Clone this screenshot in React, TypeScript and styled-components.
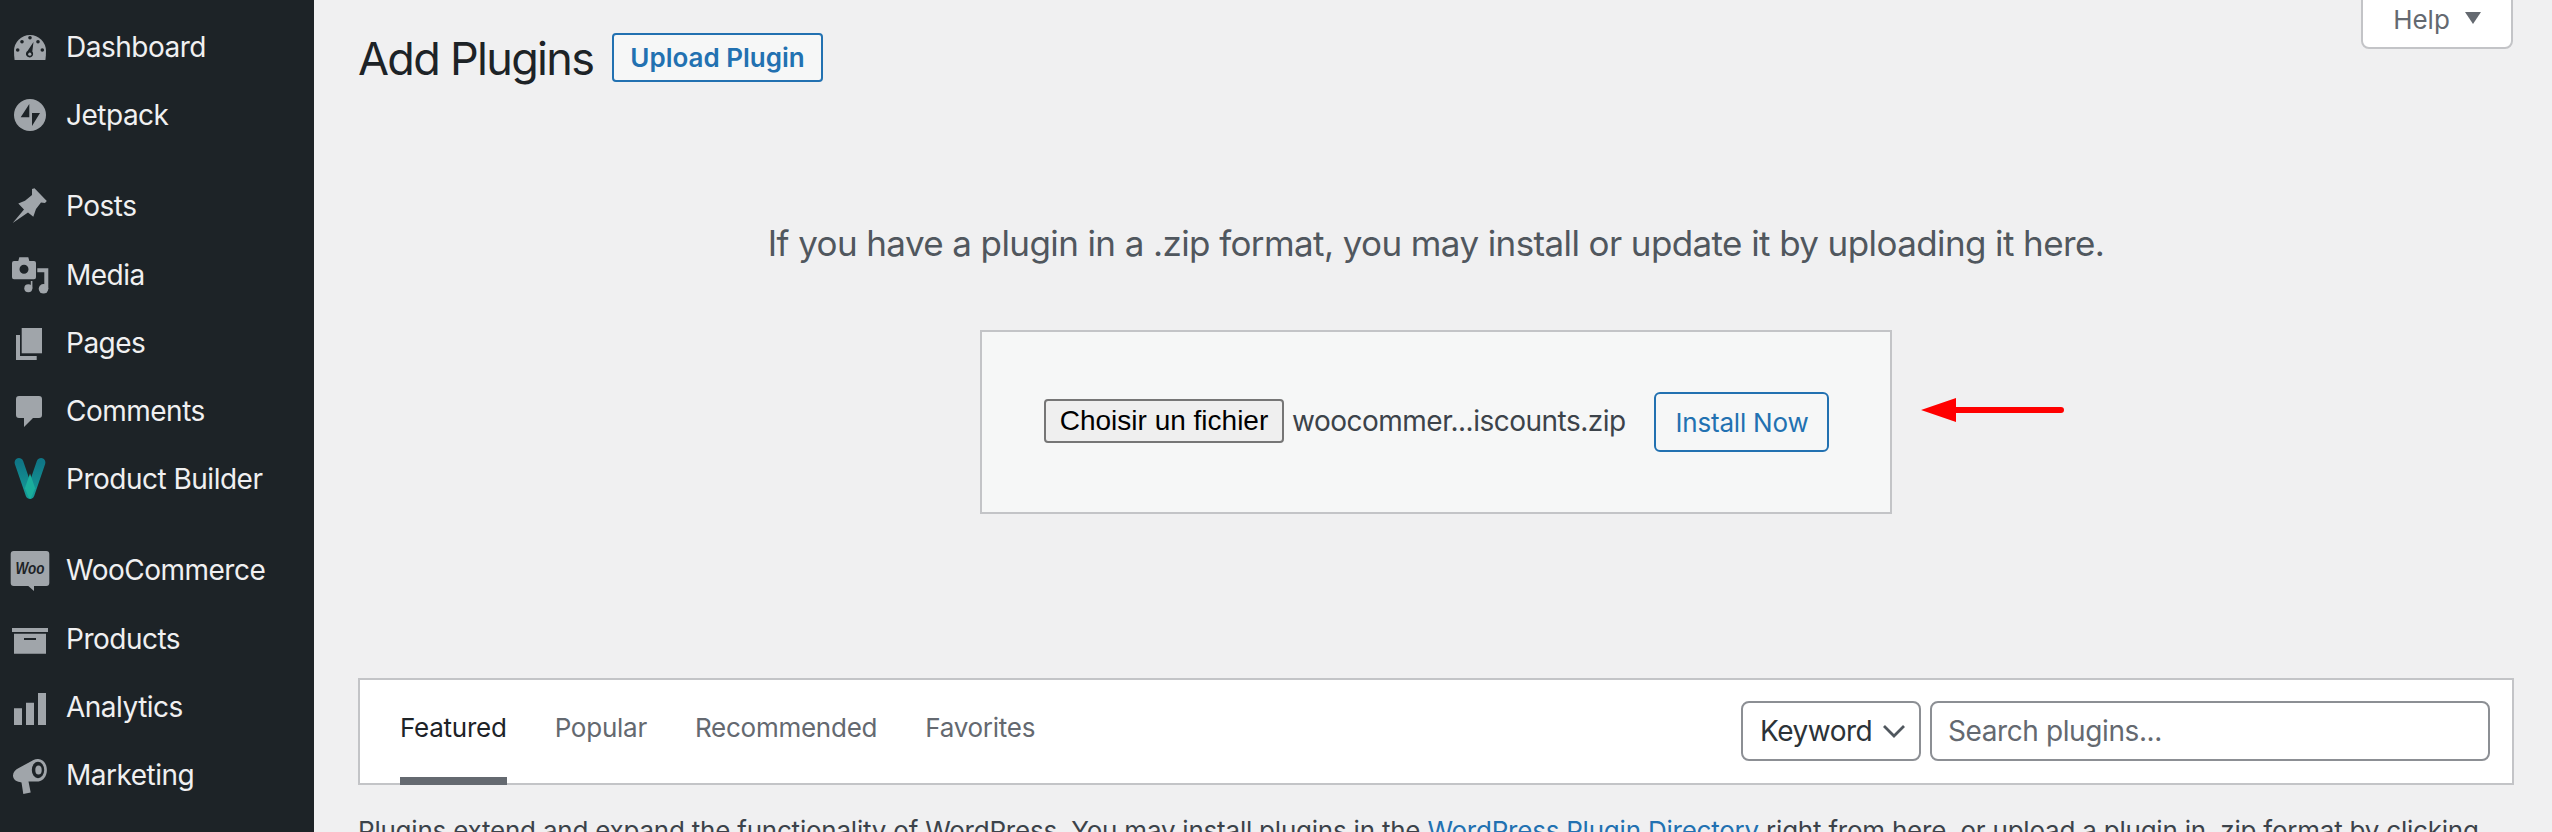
import React from 'react';
import styled, { createGlobalStyle } from 'styled-components';

const GlobalStyle = createGlobalStyle`
  html, body {
    margin: 0;
    height: 100%;
    overflow: hidden;
    background: #f0f0f1;
    font-family: Inter, "Noto Sans", sans-serif;
  }
  * {
    box-sizing: border-box;
  }
`;

const IconSvg: React.FC<{ children: React.ReactNode }> = ({ children }) => (
  <MenuIcon viewBox="0 0 40 40" fill="#a0a5aa">
    {children}
  </MenuIcon>
);

const DashboardIcon = () => (
  <IconSvg>
    <path d="M4.6 33C4.2 30 4 27 4 24a16 16 0 0 1 32 0c0 3-.2 6-.6 9z" />
    <g fill="#1d2327">
      <circle cx="20" cy="10.7" r="1.8" />
      <circle cx="12" cy="14.7" r="1.8" />
      <circle cx="28" cy="14.7" r="1.8" />
      <circle cx="7.7" cy="23" r="1.8" />
      <circle cx="32.3" cy="23" r="1.8" />
      <path d="M23.5 15l-1.2 9.5a3.6 3.6 0 1 1-4.6-.8z" />
    </g>
    <circle cx="19.8" cy="27.2" r="1.6" />
  </IconSvg>
);

const JetpackIcon = () => (
  <IconSvg>
    <circle cx="20" cy="20" r="16" />
    <path d="M19.3 9v13.3h-8.6zM22 18h8l-8 13z" fill="#1d2327" />
  </IconSvg>
);

const PostsIcon = () => (
  <IconSvg>
    <path d="M2.7 37L14 23.5l-5.7-6 6.7-2.8 7-5.7V3l2.5-.7L36.8 15 35 17l-4-.5-5 6.5-2.7 7.7-5.3-4.2z" />
  </IconSvg>
);

const MediaIcon = () => (
  <IconSvg>
    <path
      fillRule="evenodd"
      d="M4 6h4.3l1-3.7h9l1 3.7H24a2 2 0 0 1 2 2v14.3a2 2 0 0 1-2 2H4a2 2 0 0 1-2-2V8a2 2 0 0 1 2-2zm10 3.8a4.5 4.5 0 1 0 0 9 4.5 4.5 0 0 0 0-9z"
    />
    <path d="M27.3 13.3h11V34h-4V17.3h-7z" />
    <circle cx="18.3" cy="33.3" r="4" />
    <circle cx="33.5" cy="33.8" r="4.8" />
    <path d="M20.8 26h1.6v7.5h-1.6z" />
  </IconSvg>
);

const PagesIcon = () => (
  <IconSvg>
    <path d="M11.7 5H32v25.3H11.7z" />
    <path d="M6 12h4v21h16.7v4H6z" />
  </IconSvg>
);

const CommentsIcon = () => (
  <IconSvg>
    <path d="M9 5h20a3 3 0 0 1 3 3v16a3 3 0 0 1-3 3h-6l-9 9v-9H9a3 3 0 0 1-3-3V8a3 3 0 0 1 3-3z" />
  </IconSvg>
);

const BuilderIcon = () => (
  <MenuIcon viewBox="0 0 40 40">
    <defs>
      <linearGradient id="vee" x1="0" y1="0" x2="0" y2="1">
        <stop offset="0" stopColor="#0f7686" />
        <stop offset="1" stopColor="#169a96" />
      </linearGradient>
    </defs>
    <path
      d="M9 3.5L20 35.5 31 3.5"
      fill="none"
      stroke="url(#vee)"
      strokeWidth="8.8"
      strokeLinecap="round"
      strokeLinejoin="round"
    />
    <path d="M20 14.5l5.2 14.8L21 39a1.5 1.5 0 0 1-2 0l-4.2-9.7z" fill="#1aae9c" />
  </MenuIcon>
);

const WooIcon = () => (
  <IconSvg>
    <path d="M3.7 1h32.6a3 3 0 0 1 3 3v29a3 3 0 0 1-3 3H24v5l-5.7-5H3.7a3 3 0 0 1-3-3V4a3 3 0 0 1 3-3z" />
    <WooLabel x="20" y="24" textAnchor="middle" textLength="29" lengthAdjust="spacingAndGlyphs">
      Woo
    </WooLabel>
  </IconSvg>
);

const ProductsIcon = () => (
  <IconSvg>
    <path d="M2 9h36v4H2z" />
    <path fillRule="evenodd" d="M4 14.7h32v20H4zM14 19v2h12v-2z" />
  </IconSvg>
);

const AnalyticsIcon = () => (
  <IconSvg>
    <path d="M4 21.3h8V38H4zM16 15.7h8V38h-8zM28 6h8v32h-8z" />
  </IconSvg>
);

const MarketingIcon = () => (
  <IconSvg>
    <path d="M8.3 13.3L23.5 5c1.5-.8 3-1.1 4.8-1 5 .3 8.6 5 8.6 11 0 6-3.6 11-8.4 11.5-.8.1-1.5.1-2.3.1H18.5l2.2 10.9-7.4 1.4-1.8-11.5-1.7-.4C6 26.7 3 24 3 20.5c0-3.2 2.4-5.6 5.3-7.2z" />
    <ellipse cx="28" cy="15" rx="6.2" ry="8.2" fill="#1d2327" />
    <ellipse cx="28.5" cy="15" rx="3.2" ry="4.6" />
  </IconSvg>
);

type MenuEntry = { label: string; icon: React.ReactNode };

const menuGroups: MenuEntry[][] = [
  [
    { label: 'Dashboard', icon: <DashboardIcon /> },
    { label: 'Jetpack', icon: <JetpackIcon /> },
  ],
  [
    { label: 'Posts', icon: <PostsIcon /> },
    { label: 'Media', icon: <MediaIcon /> },
    { label: 'Pages', icon: <PagesIcon /> },
    { label: 'Comments', icon: <CommentsIcon /> },
    { label: 'Product Builder', icon: <BuilderIcon /> },
  ],
  [
    { label: 'WooCommerce', icon: <WooIcon /> },
    { label: 'Products', icon: <ProductsIcon /> },
    { label: 'Analytics', icon: <AnalyticsIcon /> },
    { label: 'Marketing', icon: <MarketingIcon /> },
  ],
];

const tabs = ['Featured', 'Popular', 'Recommended', 'Favorites'];

export default function App() {
  return (
    <Page>
      <GlobalStyle />
      <Sidebar>
        {menuGroups.map((group) => (
          <MenuGroup key={group[0].label}>
            {group.map((item) => (
              <MenuRow key={item.label}>
                {item.icon}
                <span>{item.label}</span>
              </MenuRow>
            ))}
          </MenuGroup>
        ))}
      </Sidebar>
      <Main>
        <HelpTab>
          Help
          <HelpCaret />
        </HelpTab>
        <Header>
          <Title>Add Plugins</Title>
          <UploadButton>Upload Plugin</UploadButton>
        </Header>
        <UploadHint>
          If you have a plugin in a .zip format, you may install or update it by uploading it here.
        </UploadHint>
        <UploadBox>
          <FileButton>Choisir un fichier</FileButton>
          <FileName>woocommer...iscounts.zip</FileName>
          <InstallButton>Install Now</InstallButton>
          <ArrowMark viewBox="0 0 143 24">
            <path d="M0 12L35 0v9h105a3 3 0 0 1 0 6H35v9z" fill="#ff0000" />
          </ArrowMark>
        </UploadBox>
        <FilterBar>
          <TabList>
            {tabs.map((tab, i) => (
              <Tab key={tab} $active={i === 0}>
                {tab}
              </Tab>
            ))}
          </TabList>
          <SearchForm>
            <SelectWrap>
              <KeywordSelect defaultValue="Keyword">
                <option>Keyword</option>
              </KeywordSelect>
              <SelectChevron viewBox="0 0 24 14">
                <path d="M2 2l10 10L22 2" fill="none" stroke="#50575e" strokeWidth="2.8" />
              </SelectChevron>
            </SelectWrap>
            <SearchInput placeholder="Search plugins..." />
          </SearchForm>
        </FilterBar>
        <Intro>
          Plugins extend and expand the functionality of WordPress. You may install plugins in the{' '}
          <IntroLink href="#">WordPress Plugin Directory</IntroLink> right from here, or upload a
          plugin in .zip format by clicking the button at the top of this page.
        </Intro>
      </Main>
    </Page>
  );
}

const Page = styled.div`
  display: flex;
  height: 832px;
  overflow: hidden;
`;

const Sidebar = styled.nav`
  flex: 0 0 314px;
  height: 832px;
  padding-top: 13px;
  background: #1d2327;
  display: flex;
  flex-direction: column;
  gap: 23px;
`;

const MenuGroup = styled.div`
  display: flex;
  flex-direction: column;
`;

const MenuRow = styled.div`
  height: 68.2px;
  padding-left: 10px;
  display: flex;
  align-items: center;
  gap: 16px;
  color: #f0f0f1;
  font-size: 28px;
  letter-spacing: -0.5px;
`;

const MenuIcon = styled.svg`
  width: 40px;
  height: 40px;
  flex: none;
  overflow: visible;
`;

const WooLabel = styled.text`
  font-family: "Liberation Sans", sans-serif;
  font-size: 17px;
  font-style: italic;
  font-weight: 700;
  letter-spacing: 0;
  fill: #1d2327;
`;

const Main = styled.main`
  position: relative;
  flex: 1;
  min-width: 0;
  padding: 33px 38px 0 44px;
`;

const HelpTab = styled.div`
  position: absolute;
  top: -2px;
  right: 39px;
  width: 152px;
  height: 51px;
  background: #fff;
  border: 2px solid #c3c4c7;
  border-radius: 0 0 8px 8px;
  display: flex;
  align-items: center;
  justify-content: center;
  gap: 15px;
  color: #646970;
  font-size: 26px;
  padding-bottom: 8px;
`;

const HelpCaret = styled.span`
  width: 0;
  height: 0;
  border-left: 8px solid transparent;
  border-right: 8px solid transparent;
  border-top: 12px solid #646970;
  margin-top: -4px;
`;

const Header = styled.header`
  display: flex;
  align-items: center;
  height: 49px;
`;

const Title = styled.h1`
  margin: 0;
  width: 254px;
  font-size: 45px;
  font-weight: 400;
  letter-spacing: -1.7px;
  color: #1d2327;
  position: relative;
  top: 1px;
`;

const UploadButton = styled.button`
  width: 211px;
  height: 49px;
  background: #f6f7f7;
  border: 2px solid #2271b1;
  border-radius: 4px;
  color: #2271b1;
  font-family: inherit;
  font-size: 26px;
  font-weight: 600;
  padding: 0;
`;

const UploadHint = styled.p`
  margin: 136px 0 0;
  height: 50px;
  line-height: 50px;
  text-align: center;
  font-size: 35px;
  letter-spacing: -0.6px;
  color: #50575e;
`;

const UploadBox = styled.div`
  position: relative;
  width: 912px;
  height: 184px;
  margin: 62px auto 0;
  background: #f6f7f7;
  border: 2px solid #c3c4c7;
  display: flex;
  align-items: center;
  padding-left: 62px;
`;

const FileButton = styled.button`
  width: 240px;
  height: 44px;
  background: #efefef;
  border: 2px solid #767676;
  border-radius: 4px;
  color: #000;
  font-family: "Liberation Sans", sans-serif;
  font-size: 28px;
  padding: 0;
  position: relative;
  top: -1px;
`;

const FileName = styled.span`
  margin-left: 8px;
  width: 362px;
  color: #3c434a;
  font-size: 28px;
  letter-spacing: -0.5px;
  white-space: nowrap;
  position: relative;
  top: -1px;
`;

const InstallButton = styled.button`
  width: 175px;
  height: 60px;
  background: #f6f7f7;
  border: 2px solid #2271b1;
  border-radius: 6px;
  color: #2271b1;
  font-family: inherit;
  font-size: 26px;
  letter-spacing: -0.2px;
  padding: 0 0 0 1px;
`;

const ArrowMark = styled.svg`
  position: absolute;
  left: 939px;
  top: 66px;
  width: 143px;
  height: 24px;
`;

const FilterBar = styled.div`
  height: 107px;
  margin-top: 164px;
  background: #fff;
  border: 2px solid #c3c4c7;
  display: flex;
  align-items: stretch;
  justify-content: space-between;
  padding: 0 22px 0 40px;
`;

const TabList = styled.div`
  display: flex;
  gap: 48px;
`;

const Tab = styled.div<{ $active: boolean }>`
  height: 105px;
  padding-top: 29px;
  line-height: 38px;
  font-size: 26px;
  letter-spacing: -0.25px;
  color: ${(p) => (p.$active ? '#1d2327' : '#646970')};
  border-bottom: 8px solid ${(p) => (p.$active ? '#646970' : 'transparent')};
`;

const SearchForm = styled.div`
  display: flex;
  align-items: flex-start;
  gap: 9px;
  padding-top: 21px;
`;

const SelectWrap = styled.div`
  position: relative;
  width: 180px;
  height: 60px;
`;

const KeywordSelect = styled.select`
  appearance: none;
  width: 100%;
  height: 100%;
  background: #fff;
  border: 2px solid #8c8f94;
  border-radius: 8px;
  padding: 0 0 0 17px;
  color: #2c3338;
  font-family: inherit;
  font-size: 28px;
  letter-spacing: -0.5px;
`;

const SelectChevron = styled.svg`
  position: absolute;
  right: 15px;
  top: 23px;
  width: 24px;
  height: 14px;
  pointer-events: none;
`;

const SearchInput = styled.input`
  width: 560px;
  height: 60px;
  background: #fff;
  border: 2px solid #8c8f94;
  border-radius: 8px;
  padding: 0 16px;
  font-family: inherit;
  font-size: 28px;
  letter-spacing: -0.4px;
  color: #2c3338;
  &::placeholder {
    color: #646970;
    opacity: 1;
  }
`;

const Intro = styled.p`
  margin: 26px 0 0;
  font-size: 26px;
  letter-spacing: -0.22px;
  line-height: 39px;
  color: #3c434a;
`;

const IntroLink = styled.a`
  color: #2271b1;
  text-decoration: none;
`;
